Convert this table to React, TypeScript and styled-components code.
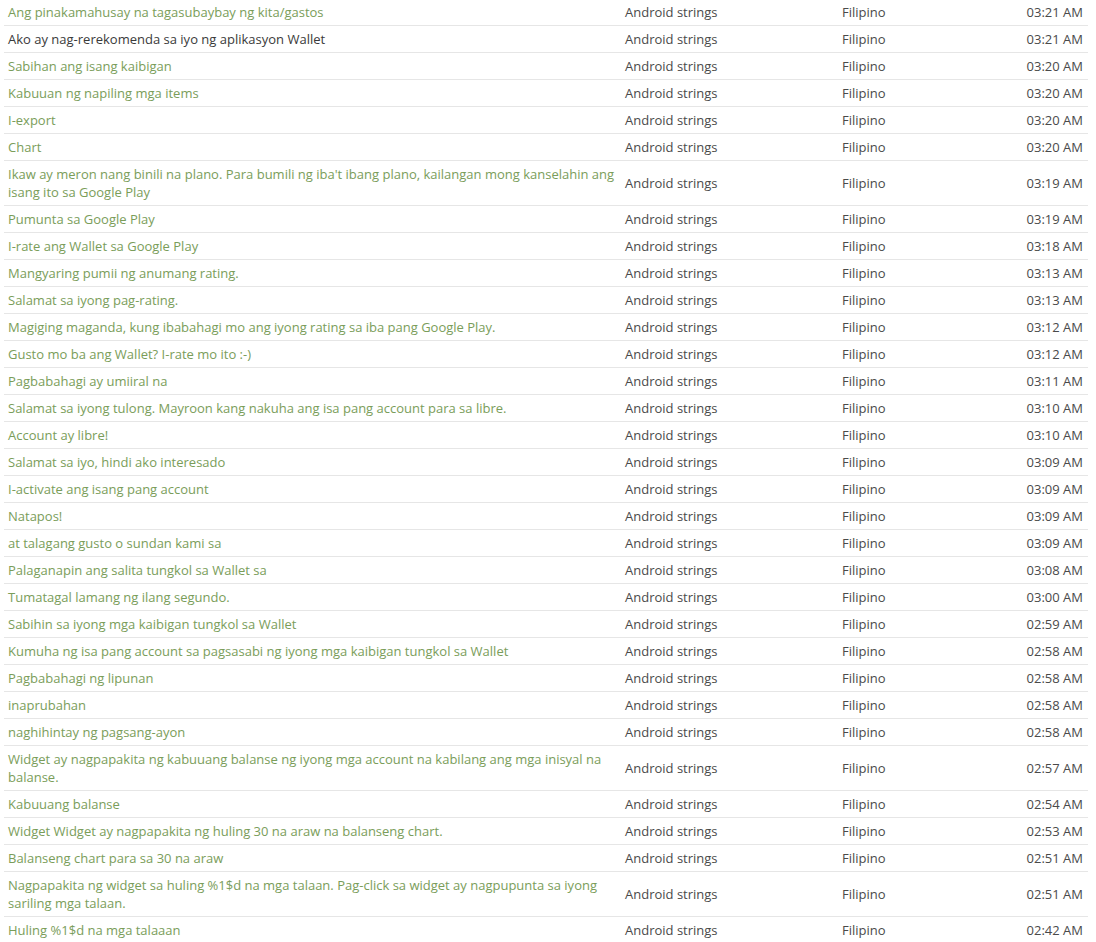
import React from "react";
import styled, { createGlobalStyle } from "styled-components";

const GlobalStyle = createGlobalStyle`
  html, body { margin: 0; padding: 0; background: #ffffff; }
  body { font-family: "Open Sans", "Liberation Sans", sans-serif; overflow: hidden; }
`;

const Wrapper = styled.div`
  padding: 0 8px 0 4px;
  margin-top: -1px;
`;

const Table = styled.table`
  width: 100%;
  border-collapse: collapse;
  table-layout: fixed;
  font-size: 13px;
  line-height: 18px;
`;

const Row = styled.tr`
  border-bottom: 1px solid #e6e6e6;
`;

const Cell = styled.td<{ $align?: "left" | "right" }>`
  padding: 4px 4px;
  vertical-align: middle;
  text-align: ${(p) => p.$align ?? "left"};
  color: #4a4a4a;
`;

const TextCell = styled(Cell)<{ $dark?: boolean }>`
  color: ${(p) => (p.$dark ? "#3a3a3a" : "#7a9d5a")};
`;

const TimeCell = styled(Cell)`
  padding-right: 5px;
`;

type Item = { text: string; time: string; dark?: boolean };

const items: Item[] = [
  { text: "Ang pinakamahusay na tagasubaybay ng kita/gastos", time: "03:21 AM" },
  { text: "Ako ay nag-rerekomenda sa iyo ng aplikasyon Wallet", time: "03:21 AM", dark: true },
  { text: "Sabihan ang isang kaibigan", time: "03:20 AM" },
  { text: "Kabuuan ng napiling mga items", time: "03:20 AM" },
  { text: "I-export", time: "03:20 AM" },
  { text: "Chart", time: "03:20 AM" },
  { text: "Ikaw ay meron nang binili na plano. Para bumili ng iba't ibang plano, kailangan mong kanselahin ang isang ito sa Google Play", time: "03:19 AM" },
  { text: "Pumunta sa Google Play", time: "03:19 AM" },
  { text: "I-rate ang Wallet sa Google Play", time: "03:18 AM" },
  { text: "Mangyaring pumii ng anumang rating.", time: "03:13 AM" },
  { text: "Salamat sa iyong pag-rating.", time: "03:13 AM" },
  { text: "Magiging maganda, kung ibabahagi mo ang iyong rating sa iba pang Google Play.", time: "03:12 AM" },
  { text: "Gusto mo ba ang Wallet? I-rate mo ito :-)", time: "03:12 AM" },
  { text: "Pagbabahagi ay umiiral na", time: "03:11 AM" },
  { text: "Salamat sa iyong tulong. Mayroon kang nakuha ang isa pang account para sa libre.", time: "03:10 AM" },
  { text: "Account ay libre!", time: "03:10 AM" },
  { text: "Salamat sa iyo, hindi ako interesado", time: "03:09 AM" },
  { text: "I-activate ang isang pang account", time: "03:09 AM" },
  { text: "Natapos!", time: "03:09 AM" },
  { text: "at talagang gusto o sundan kami sa", time: "03:09 AM" },
  { text: "Palaganapin ang salita tungkol sa Wallet sa", time: "03:08 AM" },
  { text: "Tumatagal lamang ng ilang segundo.", time: "03:00 AM" },
  { text: "Sabihin sa iyong mga kaibigan tungkol sa Wallet", time: "02:59 AM" },
  { text: "Kumuha ng isa pang account sa pagsasabi ng iyong mga kaibigan tungkol sa Wallet", time: "02:58 AM" },
  { text: "Pagbabahagi ng lipunan", time: "02:58 AM" },
  { text: "inaprubahan", time: "02:58 AM" },
  { text: "naghihintay ng pagsang-ayon", time: "02:58 AM" },
  { text: "Widget ay nagpapakita ng kabuuang balanse ng iyong mga account na kabilang ang mga inisyal na balanse.", time: "02:57 AM" },
  { text: "Kabuuang balanse", time: "02:54 AM" },
  { text: "Widget Widget ay nagpapakita ng huling 30 na araw na balanseng chart.", time: "02:53 AM" },
  { text: "Balanseng chart para sa 30 na araw", time: "02:51 AM" },
  { text: "Nagpapakita ng widget sa huling %1$d na mga talaan. Pag-click sa widget ay nagpupunta sa iyong sariling mga talaan.", time: "02:51 AM" },
  { text: "Huling %1$d na mga talaaan", time: "02:42 AM" },
];

export default function App() {
  return (
    <>
      <GlobalStyle />
      <Wrapper>
        <Table>
          <colgroup>
            <col style={{ width: 617 }} />
            <col style={{ width: 217 }} />
            <col style={{ width: 150 }} />
            <col />
          </colgroup>
          <tbody>
            {items.map((it, i) => (
              <Row key={i}>
                <TextCell $dark={it.dark}>{it.text}</TextCell>
                <Cell>Android strings</Cell>
                <Cell>Filipino</Cell>
                <TimeCell $align="right">{it.time}</TimeCell>
              </Row>
            ))}
          </tbody>
        </Table>
      </Wrapper>
    </>
  );
}
